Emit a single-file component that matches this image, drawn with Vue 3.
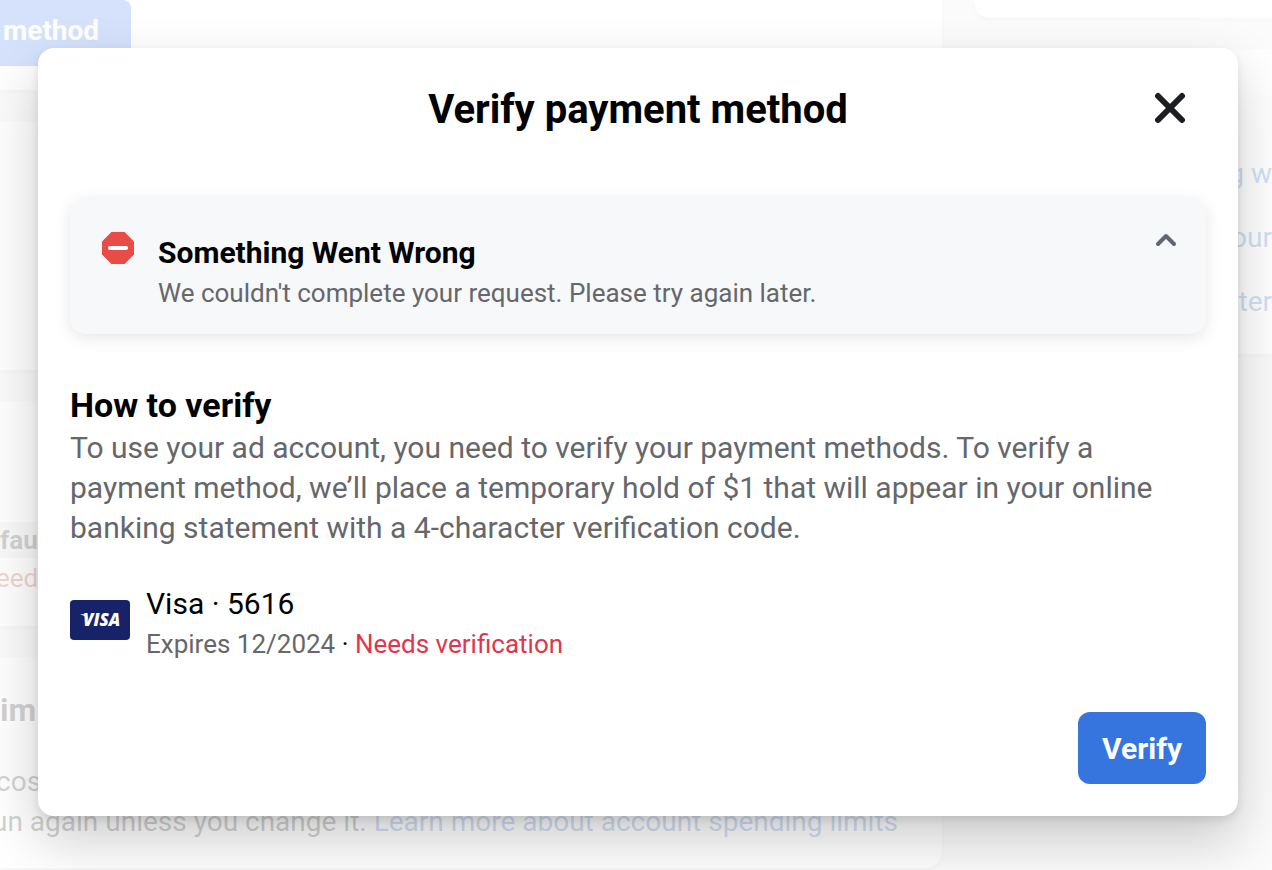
<template>
  <div class="screen">
    <!-- billing page behind the dialog -->
    <div class="page">
      <main class="column">
        <section class="card toolbar">
          <button class="add-button" type="button">method</button>
        </section>
        <section class="card balance"></section>
        <section class="card methods">
          <span class="badge">fault</span>
          <span class="status">eeds</span>
        </section>
        <section class="card limit">
          <h2>imit</h2>
          <p>costs</p>
          <p class="note">un again unless you change it. <a href="#">Learn more about account spending limits</a></p>
        </section>
      </main>
      <aside class="column">
        <section class="card side-top"></section>
        <section class="card links">
          <a v-for="link in links" :key="link" href="#">{{ link }}</a>
        </section>
      </aside>
    </div>

    <div v-if="open" class="overlay">
      <div class="dialog" role="dialog" aria-modal="true" aria-labelledby="dialog-title">
        <header class="dialog-header">
          <h1 id="dialog-title">Verify payment method</h1>
          <button class="icon-button" type="button" aria-label="Close" @click="open = false">
            <svg width="32" height="32" viewBox="0 0 32 32">
              <path d="M4 4 28 28M28 4 4 28" fill="none" stroke="#1c1e21" stroke-width="6" stroke-linecap="round" />
            </svg>
          </button>
        </header>

        <section class="alert">
          <svg class="alert-icon" width="32" height="32" viewBox="0 0 32 32">
            <path d="M9.4 0h13.2L32 9.4v13.2L22.6 32H9.4L0 22.6V9.4z" fill="#e94b46" />
            <rect x="6" y="14" width="20" height="4" rx="2" fill="#fff" />
          </svg>
          <div class="alert-text">
            <h2>Something Went Wrong</h2>
            <p v-if="expanded">We couldn't complete your request. Please try again later.</p>
          </div>
          <button class="icon-button toggle" type="button" aria-label="Collapse" @click="expanded = !expanded">
            <svg width="24" height="16" viewBox="0 0 24 16">
              <path d="M4 12l8-8 8 8" fill="none" stroke="#606770" stroke-width="4" stroke-linecap="round" stroke-linejoin="round" />
            </svg>
          </button>
        </section>

        <section class="how">
          <h2>How to verify</h2>
          <p>To use your ad account, you need to verify your payment methods. To verify a payment method, we’ll place a temporary hold of $1 that will appear in your online banking statement with a 4-character verification code.</p>
        </section>

        <section class="payment">
          <svg class="visa" width="60" height="40" viewBox="0 0 60 40">
            <rect width="60" height="40" rx="4" fill="#172269" />
            <path d="M10.5 14.2h6l2.500 7c-1.500-3.500-4.500-5.700-8.500-6.600z" fill="#fff" />
            <text x="13" y="26" class="visa-text">VISA</text>
          </svg>
          <div>
            <p class="card-name">Visa · 5616</p>
            <p class="card-info"><span class="expires">Expires 12/2024</span> · <span class="needs">Needs verification</span></p>
          </div>
        </section>

        <footer class="dialog-footer">
          <button class="verify-button" type="button">Verify</button>
        </footer>
      </div>
    </div>
  </div>
</template>

<script setup>
import { ref } from 'vue';

const open = ref(true);
const expanded = ref(true);
const links = ['g w', 'our', 'ter'];
</script>

<style>
body {
  margin: 0;
  overflow: hidden;
}
</style>

<style scoped>
.screen {
  position: relative;
  height: 100vh;
  overflow: hidden;
  font-family: Roboto, "Liberation Sans", sans-serif;
  color: #000;
}

h1,
h2,
p {
  margin: 0;
}

a {
  color: #1b5fcc;
  text-decoration: none;
}

button {
  font-family: inherit;
  border: none;
  cursor: pointer;
}

/* page */
.page {
  display: grid;
  grid-template-columns: 942px 1fr;
  gap: 32px;
  min-height: 100%;
  background: #ebebeb;
  color: #1c1e21;
}

.column {
  display: flex;
  flex-direction: column;
  gap: 32px;
}

.card {
  box-sizing: border-box;
  background: #fff;
  box-shadow: 0 2px 4px rgba(0, 0, 0, 0.12);
}

.toolbar {
  height: 90px;
}

.add-button {
  height: 66px;
  padding: 0 32px 6px 3px;
  border-radius: 0 8px 0 0;
  background: #3570ed;
  color: #fff;
  font-size: 28px;
  font-weight: 700;
}

.balance {
  height: 248px;
}

.methods {
  display: flex;
  flex-direction: column;
  align-items: flex-start;
  height: 224px;
  padding-top: 120px;
}

.badge {
  background: #e4e6eb;
  font-size: 26px;
  font-weight: 700;
  line-height: 36px;
}

.status {
  margin-left: -4px;
  color: #b5301c;
  font-size: 26px;
  line-height: 40px;
}

.limit {
  height: 210px;
  padding-top: 32px;
  border-radius: 0 0 16px 0;
  font-size: 28px;
  line-height: 40px;
}

.limit h2 {
  margin-bottom: 32px;
  font-size: 32px;
}

.limit p {
  margin-left: -4px;
}

.limit .note {
  margin-left: -8px;
}

.side-top {
  height: 18px;
  border-radius: 0 0 0 16px;
}

.links {
  display: flex;
  flex-direction: column;
  align-items: flex-end;
  gap: 24px;
  height: 304px;
  padding-top: 104px;
  font-size: 28px;
  line-height: 40px;
}

/* dialog */
.overlay {
  position: absolute;
  inset: 0;
  padding: 48px 34px 0 38px;
  background: rgba(255, 255, 255, 0.8);
}

.dialog {
  padding: 32px;
  border-radius: 16px;
  background: #fff;
  box-shadow: 0 24px 56px rgba(0, 0, 0, 0.2), 0 4px 8px rgba(0, 0, 0, 0.1);
}

.dialog-header {
  display: grid;
  grid-template-columns: 72px 1fr 72px;
  align-items: start;
  margin-bottom: 58px;
}

.dialog-header h1 {
  grid-column: 2;
  text-align: center;
  font-size: 40px;
  line-height: 60px;
}

.icon-button {
  display: flex;
  align-items: center;
  justify-content: center;
  height: 56px;
  padding: 0;
  background: none;
}

.alert {
  display: flex;
  align-items: flex-start;
  padding: 34px 28px 22px 32px;
  border-radius: 16px;
  background: #f7f8fa;
  box-shadow: 0 4px 16px rgba(0, 0, 0, 0.1);
}

.alert-text {
  flex: 1;
  margin-left: 24px;
}

.alert-text h2 {
  font-size: 30px;
  line-height: 42px;
}

.alert-text p {
  color: #65676b;
  font-size: 26px;
  line-height: 38px;
}

.toggle {
  height: 16px;
}

.how {
  margin-top: 48px;
}

.how h2 {
  font-size: 34px;
  line-height: 46px;
}

.how p {
  color: #65676b;
  font-size: 30px;
  line-height: 40px;
}

.payment {
  display: flex;
  align-items: flex-start;
  gap: 16px;
  margin-top: 36px;
}

.visa {
  margin-top: 16px;
}

.visa-text {
  fill: #fff;
  font-family: "Open Sans", sans-serif;
  font-size: 17px;
  font-style: italic;
  font-weight: 800;
}

.card-name {
  font-size: 30px;
  line-height: 40px;
}

.card-info {
  font-size: 26px;
  line-height: 40px;
}

.expires {
  color: #65676b;
}

.needs {
  color: #e0364c;
}

.dialog-footer {
  display: flex;
  justify-content: flex-end;
  margin-top: 48px;
}

.verify-button {
  height: 72px;
  padding: 0 24px;
  border-radius: 12px;
  background: #3575dd;
  color: #fff;
  font-size: 30px;
  font-weight: 700;
}
</style>
